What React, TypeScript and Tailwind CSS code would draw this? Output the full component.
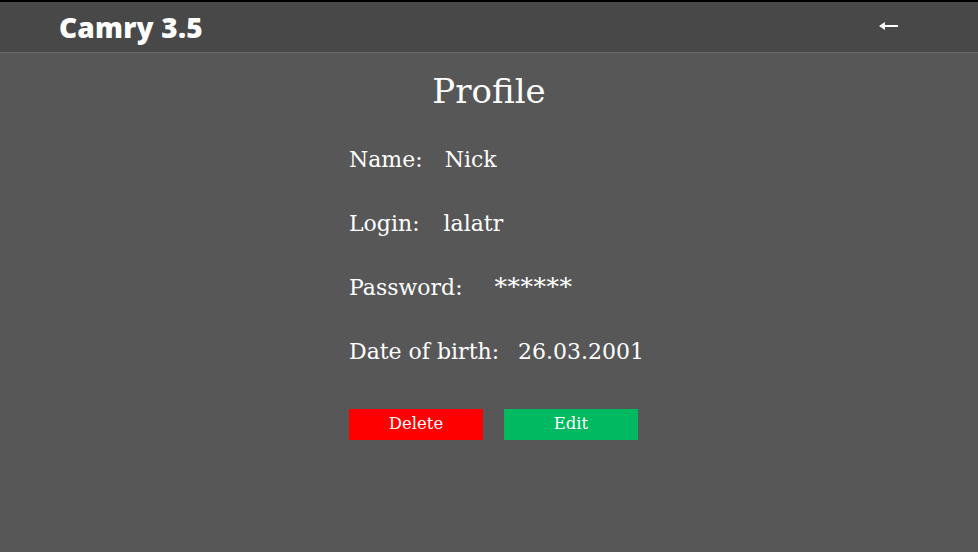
import React from "react";

const serif = { fontFamily: '"DejaVu Serif", "Liberation Serif", serif' };

function Row({ label, value, gap, valueClass = "" }: { label: string; value: string; gap: string; valueClass?: string }) {
  return (
    <div className={`flex items-center h-[32px] whitespace-nowrap ${gap}`}>
      <span>{label}</span>
      <span className={valueClass}>{value}</span>
    </div>
  );
}

export default function App() {
  return (
    <div className="w-[978px] h-[552px] bg-[#575757] flex flex-col overflow-hidden">
      <header className="h-[53px] shrink-0 bg-[#484848] border-t-2 border-t-black border-b border-b-[#6b6b6b] flex items-center justify-between pl-[59px] pr-[80px]">
        <span
          className="text-white text-[28px] font-extrabold tracking-[0.2px] leading-none"
          style={{ fontFamily: '"Open Sans", "Noto Sans", sans-serif' }}
        >
          Camry 3.5
        </span>
        <svg width="19" height="10" viewBox="0 0 19 10" className="mt-[-2px]">
          <path d="M5 4h14v2H5z" fill="#fff" />
          <path d="M0 5 L6 1 L6 9 Z" fill="#fff" />
        </svg>
      </header>
      <main className="flex flex-col items-center text-white" style={serif}>
        <h1 className="text-[34px] leading-none mt-[21px] font-light">Profile</h1>
        <div className="w-[280px] mx-auto mt-[35px] text-[22px] flex flex-col gap-[32px]">
          <Row label="Name:" value="Nick" gap="gap-[22px]" />
          <Row label="Login:" value="lalatr" gap="gap-[24px]" />
          <Row label="Password:" value="******" gap="gap-[32px]" valueClass="text-[25px] tracking-[0.5px]" />
          <Row label="Date of birth:" value="26.03.2001" gap="gap-[19px]" />
          <div className="flex gap-[21px] mt-[10px] text-[16.5px] whitespace-nowrap">
            <button className="w-[134px] h-[31px] bg-[#ff0000] text-white flex items-center justify-center shrink-0">
              Delete
            </button>
            <button className="w-[134px] h-[31px] bg-[#00b960] text-white flex items-center justify-center shrink-0">
              Edit
            </button>
          </div>
        </div>
      </main>
    </div>
  );
}
